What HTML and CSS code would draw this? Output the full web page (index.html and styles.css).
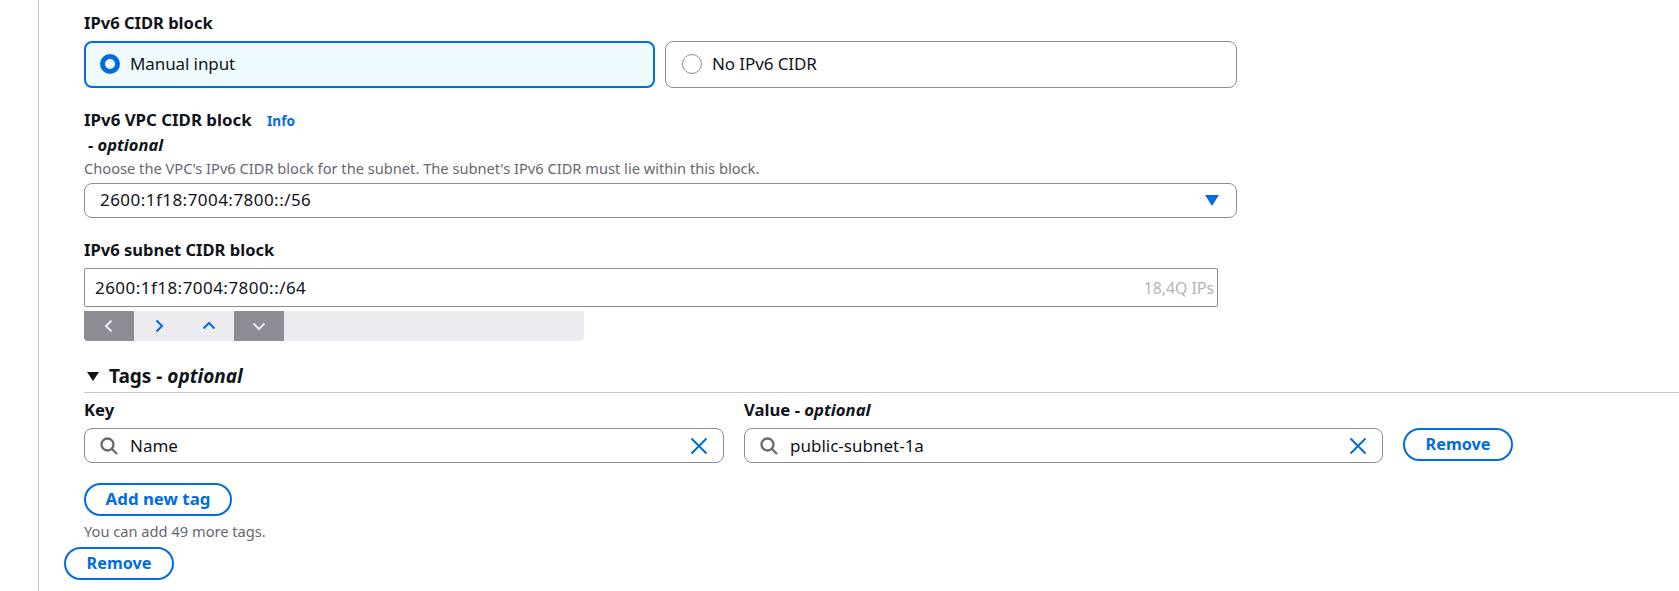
FILE: index.html
```html
<!DOCTYPE html>
<html lang="en">
<head>
<meta charset="utf-8">
<title>Subnet settings</title>
<link rel="stylesheet" href="styles.css">
</head>
<body>
<main class="panel">
  <div class="subnet">
    <section class="field field-cidr">
      <h3 class="label">IPv6 CIDR block</h3>
      <div class="tiles">
        <div class="tile tile-on">
          <span class="radio radio-on"></span>
          <span class="tile-text">Manual input</span>
        </div>
        <div class="tile tile-off">
          <span class="radio"></span>
          <span class="tile-text">No IPv6 CIDR</span>
        </div>
      </div>
    </section>

    <section class="field field-vpc">
      <h3 class="label label-vpc">IPv6 VPC CIDR block <a class="info">Info</a></h3>
      <div class="optional-line">- optional</div>
      <p class="hint">Choose the VPC's IPv6 CIDR block for the subnet. The subnet's IPv6 CIDR must lie within this block.</p>
      <div class="select">
        <span class="mono-ish">2600:1f18:7004:7800::/56</span>
        <span class="caret"></span>
      </div>
    </section>

    <section class="field field-subnet">
      <h3 class="label">IPv6 subnet CIDR block</h3>
      <div class="cidr-input">
        <span class="mono-ish">2600:1f18:7004:7800::/64</span>
        <span class="count">18,4Q IPs</span>
      </div>
      <div class="stepper">
        <span class="step step-off"><svg viewBox="0 0 16 16"><path d="M10.500 2.500 5 8l5.500 5.500"/></svg></span>
        <span class="step"><svg viewBox="0 0 16 16"><path d="M5.500 2.500 11 8l-5.500 5.500"/></svg></span>
        <span class="step"><svg viewBox="0 0 16 16"><path d="M2.500 10.500 8 5l5.500 5.500"/></svg></span>
        <span class="step step-off"><svg viewBox="0 0 16 16"><path d="M2.500 5.500 8 11l5.500-5.500"/></svg></span>
      </div>
    </section>

    <section class="tags">
      <h2 class="tags-head"><span class="tri"></span>Tags - <em>optional</em></h2>
      <div class="tag-row">
        <div class="tag-col tag-key">
          <div class="tag-label">Key</div>
          <div class="search">
            <svg class="mag" viewBox="0 0 18 18"><circle cx="7.500" cy="7.500" r="6"/><path d="m12 12 5 5"/></svg>
            <span class="search-text">Name</span>
            <svg class="clear" viewBox="0 0 18 18"><path d="m1.500 1.500 15 15M16.500 1.500l-15 15"/></svg>
          </div>
        </div>
        <div class="tag-col tag-value">
          <div class="tag-label">Value - <em>optional</em></div>
          <div class="search">
            <svg class="mag" viewBox="0 0 18 18"><circle cx="7.500" cy="7.500" r="6"/><path d="m12 12 5 5"/></svg>
            <span class="search-text">public-subnet-1a</span>
            <svg class="clear" viewBox="0 0 18 18"><path d="m1.500 1.500 15 15M16.500 1.500l-15 15"/></svg>
          </div>
        </div>
        <button class="btn btn-row">Remove</button>
      </div>
      <button class="btn btn-add">Add new tag</button>
      <p class="hint hint-tags">You can add 49 more tags.</p>
    </section>
  </div>
  <button class="btn btn-remove">Remove</button>
</main>
</body>
</html>
```
FILE: styles.css
```css
* { box-sizing: border-box; }
html, body { margin: 0; padding: 0; background: #fff; height: 100%; overflow: hidden; }
body {
  font-family: "Noto Sans", "Open Sans", sans-serif;
  font-size: 17px;
  line-height: 22px;
  color: #0f141a;
}
.panel {
  margin-left: 38px;
  border-left: 1px solid #c6c6cd;
  height: 100%;
  padding: 12px 0 0 25px;
}
.subnet { padding-left: 20px; }
.label { margin: 0; font-size: 16.550px; line-height: 22px; font-weight: 700; }
.label-vpc { font-size: 16.850px; }
.tiles { display: flex; gap: 10px; width: 1153px; margin-top: 7px; }
.tile {
  height: 47px;
  display: flex;
  align-items: center;
  padding: 0 0 2px 16px;
  border: 1px solid #8c8c94;
  border-radius: 8px;
}
.tile-text { letter-spacing: -0.1px; }
.tile-on { flex: 0 0 571px; border: 2px solid #006ce0; background: #f0fbff; padding-left: 14px; gap: 10px; }
.tile-off { flex: 0 0 572px; gap: 10px; }
.radio { width: 20px; height: 20px; border-radius: 50%; border: 1.500px solid #8c8c94; background: #fff; flex: none; }
.radio-on { border: 5.500px solid #006ce0; }
.field-vpc { margin-top: 21px; }
.info { color: #006ce0; font-size: 13.600px; margin-left: 11px; font-weight: 700; }
.optional-line { font-size: 16.500px; font-weight: 700; font-style: italic; margin-left: 4px; line-height: 22px; margin-top: 2px; }
.hint { margin: 0; font-size: 14.650px; line-height: 20px; color: #656871; }
.field-vpc .hint { margin-top: 2px; }
.mono-ish { letter-spacing: 0.46px; }
.select {
  width: 1153px;
  height: 35px;
  margin-top: 5px;
  display: flex;
  align-items: center;
  justify-content: space-between;
  padding: 0 17px 1px 15px;
  border: 1px solid #8c8c94;
  border-radius: 8px;
}
.caret { width: 0; height: 0; border-left: 7px solid transparent; border-right: 7px solid transparent; border-top: 11px solid #006ce0; }
.field-subnet { margin-top: 21px; }
.cidr-input {
  width: 1134px;
  height: 39px;
  margin-top: 7px;
  display: flex;
  align-items: center;
  justify-content: space-between;
  padding: 0 3px 0 10px;
  border: 1px solid #8c8c94;
  border-radius: 2px;
}
.count { font-size: 15.800px; color: #b4b4bb; }
.stepper {
  width: 500px;
  height: 30px;
  margin-top: 4px;
  display: flex;
  background: #ebebf0;
  border-radius: 0 0 4px 4px;
  overflow: hidden;
}
.step { width: 50px; display: flex; align-items: center; justify-content: center; }
.step svg { width: 16px; height: 16px; fill: none; stroke: #006ce0; stroke-width: 2; }
.step-off { background: #8c8c94; }
.step-off svg { stroke: #ebebf0; }
.tags { margin-top: 22px; }
.tags-head {
  margin: 0;
  font-size: 19px;
  line-height: 26px;
  font-weight: 700;
  padding-bottom: 3px;
  border-bottom: 1px solid #c6c6cd;
  display: flex;
  align-items: center;
  white-space: pre;
}
.tags-head em { font-style: italic; }
.tri { width: 0; height: 0; border-left: 6px solid transparent; border-right: 6px solid transparent; border-top: 9px solid #0f141a; margin: 0 10px 0 3px; }
.tag-row { display: flex; align-items: flex-start; margin-top: 6px; }
.tag-key { width: 640px; margin-right: 20px; }
.tag-value { width: 639px; margin-right: 20px; }
.tag-label { font-weight: 700; font-size: 16.700px; line-height: 22px; margin-bottom: 7px; }
.tag-label em { font-style: italic; }
.search {
  height: 35px;
  display: flex;
  align-items: center;
  padding: 0 15px;
  border: 1px solid #8c8c94;
  border-radius: 8px;
}
.mag { width: 18px; height: 18px; fill: none; stroke: #656871; stroke-width: 2.300; flex: none; }
.search-text { flex: 1; margin-left: 12px; }
.clear { width: 18px; height: 18px; fill: none; stroke: #006ce0; stroke-width: 2; flex: none; }
.btn {
  font: 700 16.200px/22px "Noto Sans", "Open Sans", sans-serif;
  color: #006ce0;
  background: #fff;
  border: 2px solid #006ce0;
  border-radius: 20px;
  height: 33px;
  padding: 0 0 2px;
  display: block;
}
.btn-row { width: 110px; margin-top: 29px; }
.btn-add { width: 148px; margin-top: 20px; font-size: 16.850px; }
.hint-tags { margin-top: 5px; }
.btn-remove { width: 110px; margin-top: 6px; }
```
